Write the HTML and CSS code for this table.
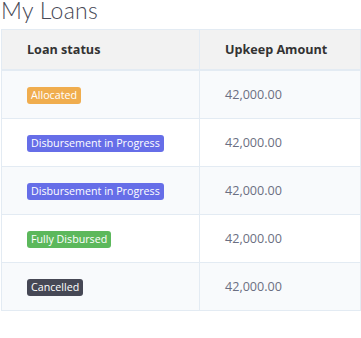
FILE: index.html
```html
<!DOCTYPE html>
<html>
<head>
<meta charset="utf-8">
<link rel="stylesheet" href="styles.css">
</head>
<body>
<div class="page">
  <h3 class="title">My Loans</h3>
  <table class="loans">
    <thead>
      <tr><th>Loan status</th><th>Upkeep Amount</th></tr>
    </thead>
    <tbody>
      <tr class="odd"><td><span class="badge warning">Allocated</span></td><td>42,000.00</td></tr>
      <tr><td><span class="badge primary">Disbursement in Progress</span></td><td>42,000.00</td></tr>
      <tr class="odd"><td><span class="badge primary">Disbursement in Progress</span></td><td>42,000.00</td></tr>
      <tr><td><span class="badge success">Fully Disbursed</span></td><td>42,000.00</td></tr>
      <tr class="odd"><td><span class="badge dark">Cancelled</span></td><td>42,000.00</td></tr>
    </tbody>
  </table>
</div>
</body>
</html>
```

FILE: styles.css
```css
html, body { margin: 0; padding: 0; background: #fff; }
.page { padding: 0 0 0 1px; font-family: "Open Sans", "Noto Sans", sans-serif; }
.title {
  margin: 0 0 9px 0;
  font-family: "Lato", "Noto Sans", sans-serif;
  font-weight: 300;
  font-size: 23px;
  line-height: 20px;
  color: #464855;
  letter-spacing: 0.3px;
}
.loans {
  border-collapse: collapse;
  width: 360px;
  table-layout: fixed;
  border: 1px solid #e3ebf3;
}
.loans th, .loans td {
  text-align: left;
  padding: 0 0 0 25px;
  border-left: 1px solid #e3ebf3;
}
.loans th:first-child, .loans td:first-child { width: 172px; }
.loans th {
  background: #f2f2f2;
  height: 39px;
  font-size: 12.6px;
  font-weight: 700;
  color: #333;
  border-bottom: 2px solid #e3ebf3;
  border-top: 1px solid #e3ebf3;
}
.loans td {
  height: 47px;
  font-size: 12.6px;
  color: #6b6f82;
  border-top: 1px solid #e3ebf3;
}
.loans tr.odd td { background: #f8fafc; }
.badge {
  display: inline-block;
  font-size: 10.7px;
  line-height: 17px;
  padding: 0 4px;
  border-radius: 3px;
  color: #fff;
  vertical-align: middle;
}
.warning { background: #f0ad4e; }
.primary { background: #666ee8; }
.success { background: #5cb85c; }
.dark { background: #464855; }
```
